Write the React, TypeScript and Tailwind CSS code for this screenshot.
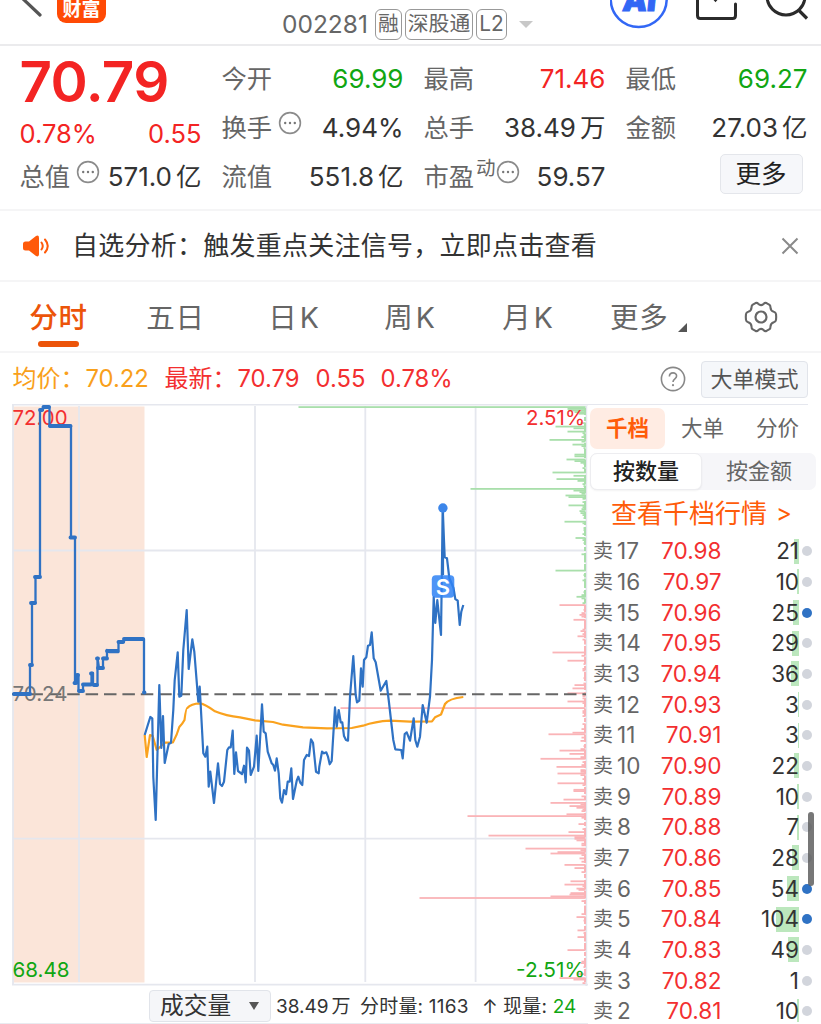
import type { ReactNode } from "react";

const PRE_LINE =
  "13,694 30,694 30,665 32,665 32,603 35.5,603 35.5,577 40,577 40,410 43,410 43,407 49.5,407 49.5,426 71,426 71,537.5 75,537.5 75,683 77,683 77,675 78.5,675 78.5,691 83,691 83,684.5 91.5,684.5 91.5,673 93,673 93,685 97.5,685 97.5,658 99,668 103,668 103,658 107,658 107,650 109,652 118.5,652 118.5,642 124,642 124,639 144,639 144,693";

const PRICE_LINE =
  "144.7,735 150.3,717 152.3,718.3 153.3,777 155.7,820 159.3,685 161.3,748 163,716 164.7,763 168.7,744 171,742.7 173.3,710 174.7,680 177.7,652.3 179.3,696.7 181.3,695.7 183.3,650 186.7,610 188.7,669 192.3,639.3 194.3,651.7 198.3,701.7 199.7,686.7 203.3,753.3 205.3,756.7 207.3,746.7 208.7,786.7 210.3,771.7 214,803 218,763.3 220,784 222,786 224,781.7 227.3,750 229,747.3 230.7,747.3 232.7,730.7 234.3,774 236,752.3 238,771 242,774 244,765.7 245.7,782.3 247,747.7 249,750.7 250.7,775 254,766.7 256.7,735.7 258.3,771 262,704.3 263.7,731.7 265.7,733.3 267.7,751.7 271.7,763.3 273.3,765 275,770.7 276.7,758.3 278.7,773.3 280.3,798.3 282,802.7 284,790 286,794.3 287.7,781.7 289.7,781.7 291.3,768.3 293,799 296.7,780.7 298.3,776.7 300.3,782.7 302.3,785 304,760 306.7,755 309,756 311,739.3 313,742.7 316,771.7 318.7,773.3 319.3,766.7 322,751.7 324,753.3 326.3,752.3 328,756.7 329.7,764.3 331.7,761 335,707.3 336.7,726.7 338.7,710 340.7,722.3 342.3,722.3 344,736 346,740 348,740.7 350,696.7 353.3,656 355.7,695 357,702.3 359.3,700.7 361,668.3 362.7,686.7 364,660 366.3,657.3 368,645.7 370,645 371.7,632.3 373.7,658.3 375.7,662.3 380.7,690.7 386.3,681 388.7,700 393.3,740 395.3,749.3 401.3,750 402.7,758.3 404.7,734 406.7,732.3 410,740.7 413.7,718.3 415.3,740 417.3,746.7 420,736.7 422.7,705 426.7,722.7 430,696.7 432,660 433.7,597 435.3,623 437.3,600 441,635 442.7,510 444.7,557.3 447,558.3 449.3,578 453.5,588 455.3,599 457.7,600.7 459.7,625 461.3,611.7 463.3,605";

const AVG_LINE =
  "M144.7 735L146.7 757L150 735L152.7 736L156.7 750L160 747L165 742.7L173 742.3Q177 735 179.3 727Q183 723 184.5 720Q186 708 187.3 708Q191 703.5 200 703.3Q205 704 215 711.3Q226 716 240 717.3L255 720.3L273 722L283 724.7L303 727.3L327 728.3L351.7 728L363 725.7Q375 721.5 390 720.7L410 721.7L432 721.3L435 717.3L441 714.5L445 704Q449 698.5 463.3 697";

const GREEN_BARS: [number, number][] = [
  [407, 287], [408.8, 18], [410.4, 17], [412, 11], [413.6, 7], [423, 5], [426.5, 30], [428.2, 12], [431.5, 18],
  [433, 3], [435, 2], [437, 4], [439.8, 36], [441.5, 4], [444.5, 13], [446, 4], [448, 2], [454.5, 11], [456.2, 11], [459.4, 19],
  [461, 11], [462.7, 5], [464, 2], [468, 3], [472.4, 33], [475.7, 12], [479, 29], [480.8, 8], [484, 3], [486, 2],
  [488.8, 115], [490.5, 12], [492, 6], [493.7, 4], [495.4, 20], [497, 17], [498.7, 3], [502, 3], [505.3, 17],
  [507, 3], [509, 4], [511, 6], [513, 5], [515, 3], [518, 2], [521.6, 21], [523.2, 3], [528, 2], [530, 2], [534, 3], [537.9, 10], [540, 3], [543, 2],
  [554.2, 4], [562, 1], [570.5, 30], [575, 2], [578, 1], [580.3, 3], [585, 1], [592, 2], [595, 4], [596.7, 9], [598.3, 4], [603, 3],
];

const RED_BARS: [number, number][] = [
  [605, 26], [609.8, 2], [613, 4], [614.8, 6], [616.5, 4], [619.7, 12], [624, 1], [629.5, 3], [631, 5], [634, 3], [636.2, 8], [639.5, 3], [644, 1],
  [652.4, 33], [655.7, 4], [660.6, 18], [664, 2], [668.8, 3], [670.4, 3], [675, 1], [678, 2], [683.4, 2],
  [685, 11], [688.3, 13], [693.2, 18], [696, 3], [698.3, 3], [701.4, 18], [703, 3], [708, 245], [711, 3], [712.8, 3], [716, 3],
  [724, 3], [729, 4], [732.6, 13], [734.2, 37], [737.5, 4], [740.8, 5], [746, 2], [749, 5], [750.5, 26], [753.8, 16],
  [757, 5], [758.7, 45], [762, 3], [765, 4], [766.8, 29], [770, 5], [771.7, 5], [773.4, 28], [775, 5], [779, 3],
  [783.2, 28], [785, 3], [789.7, 12], [791, 12], [796.3, 4], [799.5, 22], [802.8, 35], [804.5, 5], [806, 16], [807.7, 9],
  [809.5, 3], [811, 4], [814.2, 19], [816, 118], [817.6, 4], [824, 7], [829, 3], [832, 17], [835.5, 97], [837, 11], [838.7, 11], [840.3, 9], [843.6, 4],
  [845.2, 4], [848.5, 60], [850, 5], [852, 28], [853.4, 35], [855, 4], [858.3, 6], [861.6, 4], [864.8, 21], [868, 11], [872, 4],
  [881.2, 15], [884.5, 21], [886, 3], [888.5, 9], [889.8, 7], [893, 15], [894.5, 16], [896.3, 35], [897.9, 166], [901, 4], [906, 1],
  [914, 4], [917, 9], [920.5, 2], [930.3, 8], [933, 2], [937, 8], [941, 1], [950, 18], [961.5, 4], [963, 5], [967, 2],
  [974, 8], [978, 26], [979.5, 12], [983, 3],
];

const rows: [number, string, number, number, boolean][] = [
  [17, "70.98", 21, 5, false],
  [16, "70.97", 10, 2, false],
  [15, "70.96", 25, 6, true],
  [14, "70.95", 29, 7, false],
  [13, "70.94", 36, 8, false],
  [12, "70.93", 3, 1, false],
  [11, "70.91", 3, 1, false],
  [10, "70.90", 22, 5, false],
  [9, "70.89", 10, 2, false],
  [8, "70.88", 7, 2, false],
  [7, "70.86", 28, 7, false],
  [6, "70.85", 54, 12, true],
  [5, "70.84", 104, 23, true],
  [4, "70.83", 49, 11, false],
  [3, "70.82", 1, 0, false],
  [2, "70.81", 10, 2, false],
];

function MoreDots() {
  return (
    <svg width="24" height="24" viewBox="0 0 24 24" className="shrink-0">
      <circle cx="12" cy="12" r="10.4" fill="none" stroke="#8b8b8b" strokeWidth="1.6" />
      <circle cx="7.2" cy="12" r="1.2" fill="#777" />
      <circle cx="12" cy="12" r="1.2" fill="#777" />
      <circle cx="16.8" cy="12" r="1.2" fill="#777" />
    </svg>
  );
}

function Stat({ label, value, tone = "text-[#333]", icon, unit }: { label: string; value: string; tone?: string; icon?: ReactNode; unit?: string }) {
  return (
    <div className="flex h-[49px] items-center text-[25.3px] whitespace-nowrap">
      <span className="text-[#666]">{label}</span>
      {icon}
      <span className={`ml-auto text-[26px] ${tone}`}>
        {value}
        {unit && <span className="ml-[4px] text-[25.5px]">{unit}</span>}
      </span>
    </div>
  );
}

function Tag({ children }: { children: ReactNode }) {
  return (
    <span className="flex h-[31px] shrink-0 items-center rounded-[6px] border-[1.5px] border-[#999] px-[2px] text-[20.8px] leading-none whitespace-nowrap text-[#666]">
      {children}
    </span>
  );
}

function Header() {
  return (
    <header className="flex h-[46px] shrink-0 items-start overflow-hidden border-b-2 border-[#ebebed]">
      <svg width="50" height="20" viewBox="0 0 50 20" className="shrink-0">
        <path d="M21 -3L40 15" stroke="#555" strokeWidth="3.2" strokeLinecap="round" />
      </svg>
      <div className="ml-[7px] flex h-[23px] w-[49px] shrink-0 items-end justify-center rounded-b-[9px] bg-[#ff4a05] pb-[4px] text-[19px] leading-[19px] font-bold text-white">
        财富
      </div>
      <div className="mt-[9px] ml-[176px] flex shrink-0 items-center gap-[3px]">
        <span className="mr-[3px] w-[87px] text-[24.5px] leading-[31px] text-[#666]">002281</span>
        <Tag>融</Tag>
        <Tag>深股通</Tag>
        <Tag>L2</Tag>
        <svg width="14" height="8" viewBox="0 0 14 8" className="ml-[9px] shrink-0">
          <path d="M0 0H14L7 7Z" fill="#c8c8c8" />
        </svg>
      </div>
      <svg width="211" height="32" viewBox="610 0 211 32" className="ml-auto shrink-0">
        <circle cx="638.7" cy="-1" r="28" fill="none" stroke="#3267f5" strokeWidth="2.5" />
        <text
          x="0"
          y="0"
          transform="translate(638.5 10.5) skewX(-6)"
          fontFamily="Inter"
          fontSize="31"
          fontWeight="900"
          fill="#3267f5"
          stroke="#3267f5"
          strokeWidth="1"
          textAnchor="middle"
        >
          AI
        </text>
        <path d="M697.5 -2V15.5Q697.5 18.5 700.5 18.5H732.5Q735.5 18.5 735.5 15.5V4" fill="none" stroke="#2b2b2b" strokeWidth="3" strokeLinecap="round" />
        <path d="M713 -3L715.5 0L718 -3" fill="none" stroke="#2b2b2b" strokeWidth="3" />
        <circle cx="786" cy="-4" r="19" fill="none" stroke="#2b2b2b" strokeWidth="3" />
        <path d="M798.5 10L807 18.5" stroke="#2b2b2b" strokeWidth="3.2" />
      </svg>
    </header>
  );
}

function Quote() {
  return (
    <section className="grid h-[165px] shrink-0 grid-cols-[182px_182px_182px_182px] gap-x-[20px] border-b-2 border-[#f5f5f6] pt-[8px] pl-[19.5px]">
      <div>
        <div className="flex h-[56px] items-center text-[56.5px] font-semibold tracking-[-0.6px] text-[#f32423]">70.79</div>
        <div className="flex h-[49px] items-center justify-between text-[25.5px] text-[#f32423]">
          <span>0.78%</span>
          <span>0.55</span>
        </div>
        <div className="-mt-[7px]">
          <Stat label="总值" value="571.0" unit="亿" icon={<span className="-mt-[9px] ml-[6px] flex"><MoreDots /></span>} />
        </div>
      </div>
      <div>
        <Stat label="今开" value="69.99" tone="text-[#11a612]" />
        <Stat label="换手" value="4.94%" icon={<span className="-mt-[9px] ml-[6px] flex"><MoreDots /></span>} />
        <Stat label="流值" value="551.8" unit="亿" />
      </div>
      <div>
        <Stat label="最高" value="71.46" tone="text-[#f32423]" />
        <Stat label="总手" value="38.49" unit="万" />
        <Stat
          label="市盈"
          value="59.57"
          icon={
            <span className="-mt-[10px] ml-[2px] flex items-center">
              <span className="-mt-[5px] text-[19.5px] leading-none text-[#666]">动</span>
              <MoreDots />
            </span>
          }
        />
      </div>
      <div>
        <Stat label="最低" value="69.27" tone="text-[#11a612]" />
        <Stat label="金额" value="27.03" unit="亿" />
        <div className="mt-[2px] mr-[5px] ml-auto flex h-[40px] w-[83px] items-center justify-center rounded-[5px] border-[1.5px] border-[#e4e6eb] bg-[#f6f7fa] text-[25.5px] text-[#222]">
          更多
        </div>
      </div>
    </section>
  );
}

function Notice() {
  return (
    <section className="flex h-[71px] shrink-0 items-center border-b-2 border-[#f5f5f6] pl-[23px]">
      <svg width="27" height="22" viewBox="0 0 27 22">
        <path d="M2.5 6.5H6L13 1Q16 -0.5 16 3V19Q16 22.5 13 21L6 15.5H2.5Q0 15.5 0 13V9Q0 6.5 2.5 6.5Z" fill="#ff5a0a" />
        <path d="M18.5 7.5Q21 11 18.5 14.5M22 4.5Q27.5 11 22 17.5" fill="none" stroke="#ff5a0a" strokeWidth="2" strokeLinecap="round" />
      </svg>
      <span className="ml-[22px] text-[26px] tracking-[0.25px] whitespace-nowrap text-[#333]">自选分析：触发重点关注信号，立即点击查看</span>
      <svg width="18" height="18" viewBox="0 0 18 18" className="mr-[22px] ml-auto">
        <path d="M1.5 1.5L16.5 16.5M16.5 1.5L1.5 16.5" stroke="#8a8a8a" strokeWidth="2" />
      </svg>
    </section>
  );
}

function Tabs() {
  return (
    <nav className="flex h-[71px] shrink-0 items-stretch border-b-2 border-[#f5f5f6] text-[28.5px] tracking-[0.8px] text-[#666]">
      <div className="flex w-[117px] flex-col items-center pt-[15px] text-[#ec5409]">
        <span className="leading-[42px] font-medium">分时</span>
        <span className="mt-[2px] h-[6px] w-[41px] rounded-full bg-[#ec5409]" />
      </div>
      <div className="flex w-[117px] justify-center pt-[15px] leading-[42px]">五日</div>
      <div className="flex w-[120px] justify-center gap-[2px] pt-[15px] leading-[42px]"><span>日</span><span>K</span></div>
      <div className="flex w-[112px] justify-center gap-[2px] pt-[15px] leading-[42px]"><span>周</span><span>K</span></div>
      <div className="flex w-[124px] justify-center gap-[2px] pt-[15px] leading-[42px]"><span>月</span><span>K</span></div>
      <div className="flex w-[118px] pt-[15px] pl-[20px] leading-[42px]">
        更多
        <svg width="9" height="9" viewBox="0 0 9 9" className="mt-[26px] ml-[9px]">
          <path d="M9 0V9H0Z" fill="#555" />
        </svg>
      </div>
      <svg width="36" height="34" viewBox="0 0 36 34" className="mt-[18px] ml-[35px]">
        <path
          d="M12.2 2.3Q14 1.7 15 3Q18 6 21 3Q22 1.7 23.8 2.3L27 4.2Q28 5 28 7Q28 10.5 31.5 11.5Q33.5 12 33.8 14L34 17L33.8 20Q33.5 22 31.5 22.5Q28 23.5 28 27Q28 29 27 29.8L23.8 31.7Q22 32.3 21 31Q18 28 15 31Q14 32.3 12.2 31.7L9 29.8Q8 29 8 27Q8 23.5 4.5 22.5Q2.5 22 2.2 20L2 17L2.2 14Q2.5 12 4.5 11.5Q8 10.5 8 7Q8 5 9 4.2Z"
          fill="none"
          stroke="#666"
          strokeWidth="2.2"
          strokeLinejoin="round"
          transform="translate(0.9 0.85) scale(0.95)"
        />
        <circle cx="18" cy="17" r="5.5" fill="none" stroke="#666" strokeWidth="2.2" />
      </svg>
    </nav>
  );
}

function PriceSummary() {
  return (
    <div className="flex h-[51px] shrink-0 items-center pl-[12.5px] text-[24px] text-[#f32f30]">
      <span className="w-[73px] text-[#f9a01b]">均价：</span>
      <span className="w-[79px] text-[23.8px] text-[#f9a01b]">70.22</span>
      <span className="w-[73px]">最新：</span>
      <span className="w-[78px] text-[23.8px]">70.79</span>
      <span className="w-[65px] text-[23.8px]">0.55</span>
      <span className="text-[23.8px]">0.78%</span>
      <svg width="26" height="26" viewBox="0 0 26 26" className="ml-auto">
        <circle cx="13" cy="13" r="11.6" fill="none" stroke="#888" strokeWidth="1.6" />
        <path d="M9.4 10.5C9.4 5.8 16.6 5.8 16.6 10C16.6 13 13 12.6 13 16" fill="none" stroke="#888" strokeWidth="1.6" />
        <circle cx="13" cy="19.2" r="1.1" fill="#888" />
      </svg>
      <div className="mt-[1px] mr-[13px] ml-[15px] flex h-[37px] w-[107px] items-center justify-center rounded-[4px] border-[1.5px] border-[#e1e4ea] bg-[#f5f7fa] text-[22px] text-[#555]">
        大单模式
      </div>
    </div>
  );
}

function Chart() {
  return (
    <svg width="588" height="582" viewBox="0 404 588 582" className="block shrink-0" fontFamily="Inter, 'Liberation Sans', sans-serif">
      <rect x="13" y="406.5" width="131.5" height="576" fill="#fbe5d9" />
      <g stroke="#e5e7ee" strokeWidth="1.8">
        <path d="M13 404V985M79 406V982M255 406V982M365.3 406V982M475.6 406V982M586.3 406V986M13 550.5H586M13 838.7H586" />
        <path d="M12 404.5H588M12 984.7H588" />
      </g>
      <g fill="#a9dfab">
        {GREEN_BARS.map(([y, w]) => (
          <rect key={y} x={585.5 - w} y={y - 0.8} width={w} height={1.8} />
        ))}
      </g>
      <g fill="#fab4b7">
        {RED_BARS.map(([y, w]) => (
          <rect key={y} x={585.5 - w} y={y - 0.8} width={w} height={1.8} />
        ))}
      </g>
      <path d="M585 408V604" stroke="#a9dfab" strokeWidth="2" strokeDasharray="7 2 4 2 9 2" />
      <path d="M585 605V984" stroke="#fab4b7" strokeWidth="2" strokeDasharray="7 2 4 2 9 2" />
      <path d="M12 694.3H586" stroke="#666" strokeWidth="2" strokeDasharray="12.5 5.9" strokeDashoffset="0" />
      <g fontSize="20.5">
        <text x="12.5" y="425" fill="#f32f30" textLength="55" lengthAdjust="spacingAndGlyphs">72.00</text>
        <text x="12.5" y="701" fill="#777" textLength="55" lengthAdjust="spacingAndGlyphs">70.24</text>
        <text x="12.5" y="977" fill="#11a612" textLength="57" lengthAdjust="spacingAndGlyphs">68.48</text>
        <text x="526" y="425" fill="#f32f30" textLength="59" lengthAdjust="spacingAndGlyphs">2.51%</text>
        <text x="516" y="977" fill="#11a612" textLength="69" lengthAdjust="spacingAndGlyphs">-2.51%</text>
      </g>
      <path d={AVG_LINE} fill="none" stroke="#faa21e" strokeWidth="2.2" strokeLinejoin="round" />
      <polyline points={PRE_LINE} fill="none" stroke="#2f72c4" strokeWidth="2.3" strokeLinejoin="round" />
      <path
        d="M14 694H30M30 665H32M31 603H35M35 577H40M40 410H42M43.5 407H49M50 426H70.5M70.5 537.5H75M74.5 683H76M77 675H78M79 691H83M83 684.5H91M91 673.5H92M94 685H97M97 658.5H98M98 668H103M103 658.5H107M107 651H117.5M118.5 642H123M124 639H143M144 692.5H144.5"
        stroke="#2f72c4"
        strokeWidth="3.9"
        strokeLinecap="round"
      />
      <polyline points={PRICE_LINE} fill="none" stroke="#2f72c4" strokeWidth="2.2" strokeLinejoin="round" />
      <path d="M443 510V575" stroke="#2f72c4" strokeWidth="2.2" />
      <circle cx="442.9" cy="508" r="4.7" fill="#3c86ea" />
      <rect x="431.8" y="575.3" width="22.5" height="22.5" rx="4" fill="#2f82f5" fillOpacity="0.85" />
      <text x="443" y="594.5" fontSize="22" fontWeight="600" fill="#fff" textAnchor="middle">S</text>
    </svg>
  );
}

function VolumeBar() {
  return (
    <div className="flex h-[38px] items-center border-b border-[#e9ebf0] pl-[149px] text-[19px] whitespace-nowrap text-[#333]">
      <div className="mt-[2px] flex h-[32px] w-[122px] shrink-0 items-center rounded-[4px] border border-[#e1e4ea] bg-[#f5f6f9] pl-[10px] text-[23.7px]">
        成交量
        <svg width="10" height="8" viewBox="0 0 10 8" className="ml-[18px]">
          <path d="M0 0H10L5 8Z" fill="#555" />
        </svg>
      </div>
      <span className="mt-[5px] ml-[5px] w-[84px]">38.49<span className="ml-[3px]">万</span></span>
      <span className="mt-[5px] w-[122px] tracking-[0.2px]">分时量: 1163</span>
      <span className="mt-[5px] w-[21px]">↑</span>
      <span className="mt-[5px] tracking-[0.2px]">现量: <span className="text-[#11a612]">24</span></span>
    </div>
  );
}

function OrderBook() {
  return (
    <aside className="relative flex w-[233px] shrink-0 flex-col">
      <div className="mr-[13px] h-px shrink-0 bg-[#e5e7ee]" />
      <div className="mt-[3px] flex h-[41px] shrink-0 items-center text-[21.5px] text-[#666]">
        <span className="ml-[2px] flex h-[41px] w-[75px] items-center justify-center rounded-[7px] bg-[#ffece3] font-bold text-[#ff5c0a]">千档</span>
        <span className="ml-[16px]">大单</span>
        <span className="ml-[32px]">分价</span>
      </div>
      <div className="mt-[4px] ml-[2px] flex h-[37px] w-[226px] shrink-0 rounded-[7px] bg-[#f6f6f9] text-[22px] text-[#666]">
        <span className="flex w-[112px] items-center justify-center rounded-[7px] border border-[#ededf0] bg-white font-medium text-[#222] shadow-xs">按数量</span>
        <span className="flex flex-1 items-center justify-center">按金额</span>
      </div>
      <div className="flex h-[46px] shrink-0 items-center pl-[23px] text-[26px] whitespace-nowrap text-[#ff5c0a]">
        <span>查看千档行情</span>
        <span className="ml-[9px] text-[24px]">&gt;</span>
      </div>
      <div className="flex h-[486px] flex-col overflow-hidden">
        {rows.map(([level, price, volume, width, active]) => (
          <div key={level} className="flex h-[30.67px] shrink-0 items-center pl-[5px] text-[22.5px] leading-[30px]">
            <span className="w-[24px] text-[20px] text-[#666]">卖</span>
            <span className="w-[31px] text-[#666]">{level}</span>
            <span className="w-[73.5px] text-right text-[22.6px] text-[#f32f30]">{price}</span>
            <span className="relative ml-auto flex h-[25px] w-[70px] items-center justify-end text-[#333]">
              <span className="absolute top-0 right-0 h-[25px] bg-[#bce7bd]" style={{ width: width }} />
              <span className="relative">{volume}</span>
            </span>
            <span className={`mr-[9px] ml-[3px] h-[10px] w-[10px] rounded-full ${active ? "bg-[#2f72c4]" : "bg-[#d2d5dc]"}`} />
          </div>
        ))}
      </div>
      <span className="absolute top-[408px] right-[7px] h-[74px] w-[6px] rounded-full bg-[#555]/80" />
    </aside>
  );
}

export default function App() {
  return (
    <main className="flex h-[1024px] w-[821px] flex-col overflow-hidden bg-white font-['Inter','Noto_Sans_CJK_SC',sans-serif]">
      <Header />
      <Quote />
      <Notice />
      <Tabs />
      <PriceSummary />
      <div className="flex flex-1">
        <div className="w-[588px] shrink-0">
          <Chart />
          <VolumeBar />
        </div>
        <OrderBook />
      </div>
    </main>
  );
}
